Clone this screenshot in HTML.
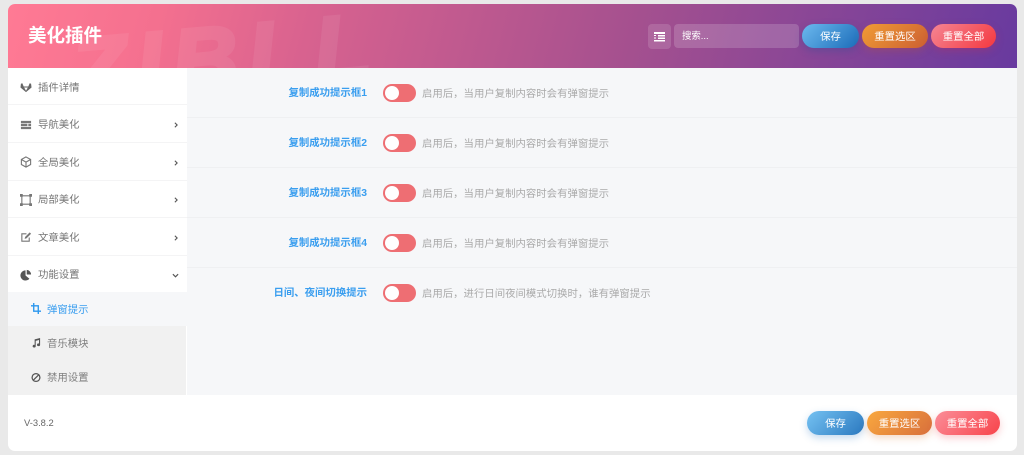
<!DOCTYPE html>
<html lang="zh">
<head>
<meta charset="utf-8">
<title>美化插件</title>
<style>
*{box-sizing:border-box;margin:0;padding:0}
html,body{width:1024px;height:455px;overflow:hidden;background:#e9e9e9;font-family:"Liberation Sans","Noto Sans CJK SC",sans-serif}
.card{position:absolute;left:8px;top:4px;width:1009px;height:447px;background:#fff;border-radius:7px;overflow:hidden}
.hd{position:absolute;left:0;top:0;width:1009px;height:64px;background:linear-gradient(105deg,#ff7a94 0%,#f4708f 15%,#d8628f 30%,#a4508f 62%,#683a9f 100%);overflow:hidden}
.wm{position:absolute;left:62px;top:9px;font:italic 700 92px/92px "Liberation Sans",sans-serif;letter-spacing:10px;color:#fff;-webkit-text-stroke:4px #fff;opacity:.07;transform:rotate(-5deg);white-space:nowrap}
.title{position:absolute;left:20px;top:18px;font-size:18.5px;line-height:28px;font-weight:700;color:#fff}
.sq{position:absolute;left:640px;top:20px;width:23px;height:25px;border-radius:4px;background:rgba(255,255,255,.14)}
.search{position:absolute;left:666px;top:20px;width:125px;height:24px;border-radius:4px;background:rgba(255,255,255,.17);color:#fff;font-size:9.4px;line-height:23px;padding-left:8px}
.btn{position:absolute;height:24px;border-radius:12px;color:#fff;font-size:10.4px;line-height:27px;text-align:center;overflow:hidden}
.bw{position:absolute;top:20px;height:24px;border-radius:12px}
.blue{background:linear-gradient(135deg,#6cb9ee,#1b6cb9);box-shadow:0 3px 8px rgba(40,80,150,.35)}
.orange{background:linear-gradient(135deg,#f09c35,#cc5f32);box-shadow:0 3px 8px rgba(180,80,60,.35)}
.red{background:linear-gradient(135deg,#f58593,#f4383f);box-shadow:0 3px 8px rgba(190,50,90,.35)}
.side{position:absolute;left:0;top:64px;width:179px;height:327px;background:#fff}
.it{position:absolute;left:0;width:179px;height:38px;border-bottom:1px solid #f4f4f5;font-size:10.4px;line-height:41px;color:#777;padding-left:30px}
.it svg{position:absolute;left:12px;top:14px;width:12px;height:12px}
.it svg.ch{left:166px;top:17px;width:4px;height:6px}
.it svg.dn{left:164px;top:18px;width:7px;height:5px}
.sub{position:absolute;left:0;width:178px;height:34px;background:#f1f1f1;font-size:10.4px;line-height:37px;color:#808080;padding-left:39px}
.sub svg{position:absolute;left:23px;top:11px;width:10px;height:11px}
.main{position:absolute;left:179px;top:64px;width:830px;height:327px;background:#f6f7f9}
.row{position:absolute;left:0;width:830px;height:50px;border-bottom:1px solid #eff0f2}
.lb{position:absolute;right:650px;top:16px;color:#3a9eef;font-size:10.4px;line-height:19px;font-weight:700;white-space:nowrap}
.tg{position:absolute;left:196px;top:16px;width:33px;height:18px;border-radius:9px;background:#ee6e73}
.tg i{position:absolute;left:2px;top:2px;width:14px;height:14px;border-radius:50%;background:#fff}
.ds{position:absolute;left:235px;top:17px;color:#aaa;font-size:10.4px;line-height:19px;white-space:nowrap}
.ver{position:absolute;left:16px;top:412px;font-size:9.4px;line-height:14px;color:#666}
</style>
</head>
<body>
<div class="card">
  <div class="hd">
    <div class="wm">ZIBLL</div>
    <div class="title">美化插件</div>
    <div class="sq"><svg width="23" height="25" viewBox="0 0 23 25"><path fill="#fff" d="M6 8h11v2H6zM6 11h2v1H6zM10 11h7v1.500h-7zM6 13.500h2v1H6zM10 13.500h7V15h-7zM6 16h11v1.500H6z"/></svg></div>
    <div class="search">搜索...</div>
    <div class="bw blue" style="left:794px;width:57px"></div>
    <div class="btn" style="left:794px;top:20px;width:57px">保存</div>
    <div class="bw orange" style="left:854px;width:66px"></div>
    <div class="btn" style="left:854px;top:20px;width:66px">重置选区</div>
    <div class="bw red" style="left:923px;width:65px"></div>
    <div class="btn" style="left:923px;top:20px;width:65px">重置全部</div>
  </div>

  <div class="side">
    <div class="it" style="top:0;height:37px"><svg viewBox="0 0 13 13" style="top:13px"><path fill="#666" d="M1 3l1.500-.5L4 6h5l1.500-3.500L12 3l.5 4-6 5-6-5zM4.500 7l2 3.500L8.500 7z"/></svg>插件详情</div>
    <div class="it" style="top:37px"><svg viewBox="0 0 13 13"><path fill="#777" d="M1 2h11v2.500H1zM1 5.200h7v2.500H1zM9 5.200h3v2.500H9zM1 8.500h11V11H1z"/></svg>导航美化<svg class="ch" viewBox="0 0 5 8"><path fill="none" stroke="#555" stroke-width="1.500" d="M1 1l3 3-3 3"/></svg></div>
    <div class="it" style="top:75px"><svg viewBox="0 0 13 13" style="top:13px"><path fill="none" stroke="#777" stroke-width="1.200" d="M6.500 1l5 2.800v5.400l-5 2.800-5-2.800V3.800zM1.500 3.800l5 2.800 5-2.800M6.500 6.600V12"/></svg>全局美化<svg class="ch" viewBox="0 0 5 8"><path fill="none" stroke="#555" stroke-width="1.500" d="M1 1l3 3-3 3"/></svg></div>
    <div class="it" style="top:112px"><svg viewBox="0 0 13 13"><path fill="none" stroke="#777" stroke-width="1.200" d="M2 2h9v9H2z"/><path fill="#777" d="M0 0h3v3H0zM10 0h3v3h-3zM0 10h3v3H0zM10 10h3v3h-3z"/></svg>局部美化<svg class="ch" viewBox="0 0 5 8"><path fill="none" stroke="#555" stroke-width="1.500" d="M1 1l3 3-3 3"/></svg></div>
    <div class="it" style="top:150px"><svg viewBox="0 0 13 13" style="top:13px"><path fill="none" stroke="#777" stroke-width="1.200" d="M10 7v4H2V3h5"/><path fill="#777" d="M5 8.500l.5-2L10.500 1.500l1.500 1.500-5 5z"/></svg>文章美化<svg class="ch" viewBox="0 0 5 8"><path fill="none" stroke="#555" stroke-width="1.500" d="M1 1l3 3-3 3"/></svg></div>
    <div class="it" style="top:187px;border:0"><svg viewBox="0 0 13 13"><path fill="#555" d="M6 1.500v5.500l4.200 3.500A5.500 5.500 0 1 1 6 1.500zM7.300 1a5 5 0 0 1 4.700 5H7.300z"/></svg>功能设置<svg class="dn" viewBox="0 0 8 5"><path fill="none" stroke="#555" stroke-width="1.300" d="M1 1l3 3 3-3"/></svg></div>
    <div class="sub" style="top:224px;background:#f6f7f9;color:#3a9eef;width:179px"><svg viewBox="0 0 11 12"><path fill="none" stroke="#2b97ee" stroke-width="1.500" d="M3 0v9h8M0 3h8v9"/></svg>弹窗提示</div>
    <div class="sub" style="top:258px;height:35px"><svg viewBox="0 0 11 12"><path fill="#555" d="M4 2.500l6-1.500v7.500a1.700 1.500 0 1 1-1.200-1.400V3.300L5.200 4.200v5.800a1.700 1.500 0 1 1-1.200-1.400z"/></svg>音乐模块</div>
    <div class="sub" style="top:293px;line-height:35px"><svg viewBox="0 0 11 12"><circle cx="5.500" cy="6" r="4.300" fill="none" stroke="#555" stroke-width="1.400"/><path stroke="#555" stroke-width="1.400" d="M2.500 9l6-6"/></svg>禁用设置</div>
  </div>

  <div class="main">
    <div class="row" style="top:0"><div class="lb">复制成功提示框1</div><div class="tg"><i></i></div><div class="ds">启用后，当用户复制内容时会有弹窗提示</div></div>
    <div class="row" style="top:50px"><div class="lb">复制成功提示框2</div><div class="tg"><i></i></div><div class="ds">启用后，当用户复制内容时会有弹窗提示</div></div>
    <div class="row" style="top:100px"><div class="lb">复制成功提示框3</div><div class="tg"><i></i></div><div class="ds">启用后，当用户复制内容时会有弹窗提示</div></div>
    <div class="row" style="top:150px"><div class="lb">复制成功提示框4</div><div class="tg"><i></i></div><div class="ds">启用后，当用户复制内容时会有弹窗提示</div></div>
    <div class="row" style="top:200px;border:0"><div class="lb">日间、夜间切换提示</div><div class="tg"><i></i></div><div class="ds">启用后，进行日间夜间模式切换时，谁有弹窗提示</div></div>
  </div>

  <div class="ver">V-3.8.2</div>
  <div class="bw" style="left:799px;top:407px;width:57px;background:linear-gradient(135deg,#75c2f2,#2a78bf);box-shadow:0 3px 8px rgba(60,130,200,.3)"></div>
  <div class="btn" style="left:799px;top:407px;width:57px">保存</div>
  <div class="bw" style="left:859px;top:407px;width:65px;background:linear-gradient(135deg,#f9a83e,#d86f3c);box-shadow:0 3px 8px rgba(220,130,70,.3)"></div>
  <div class="btn" style="left:859px;top:407px;width:65px">重置选区</div>
  <div class="bw" style="left:927px;top:407px;width:65px;background:linear-gradient(135deg,#fb8d98,#f8444b);box-shadow:0 3px 8px rgba(240,90,100,.3)"></div>
  <div class="btn" style="left:927px;top:407px;width:65px">重置全部</div>
</div>
</body>
</html>
